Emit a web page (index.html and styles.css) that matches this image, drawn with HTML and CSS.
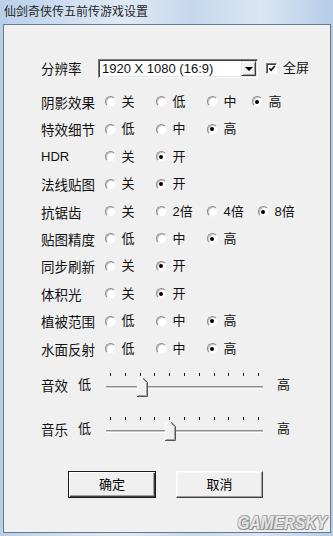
FILE: index.html
```html
<!DOCTYPE html>
<html lang="zh-CN">
<head>
<meta charset="utf-8">
<title>仙剑奇侠传五前传游戏设置</title>
<link rel="stylesheet" href="styles.css">
</head>
<body>
<div class="window">
  <div class="titlebar"><span class="title">仙剑奇侠传五前传游戏设置</span></div>
  <div class="frame">
    <div class="client">
      <div class="res-row">
        <span class="label res-label">分辨率</span>
        <div class="select">
          <span class="select-text">1920 X 1080 (16:9)</span>
          <span class="select-btn"><span class="arrow"></span></span>
        </div>
        <span class="checkbox"><svg width="9" height="9" viewBox="0 0 9 9"><path d="M1.5 4.2 L3.5 6.5 L7.6 1.8" fill="none" stroke="#000" stroke-width="1.7"/></svg></span>
        <span class="opt-text">全屏</span>
      </div>

      <div class="options">
        <div class="row"><span class="label">阴影效果</span>
          <span class="opt"><span class="radio"></span><span class="opt-text">关</span></span>
          <span class="opt"><span class="radio"></span><span class="opt-text">低</span></span>
          <span class="opt opt-narrow"><span class="radio"></span><span class="opt-text">中</span></span>
          <span class="opt"><span class="radio checked"></span><span class="opt-text">高</span></span>
        </div>
        <div class="row"><span class="label">特效细节</span>
          <span class="opt"><span class="radio"></span><span class="opt-text">低</span></span>
          <span class="opt"><span class="radio"></span><span class="opt-text">中</span></span>
          <span class="opt"><span class="radio checked"></span><span class="opt-text">高</span></span>
        </div>
        <div class="row"><span class="label label-latin">HDR</span>
          <span class="opt"><span class="radio"></span><span class="opt-text">关</span></span>
          <span class="opt"><span class="radio checked"></span><span class="opt-text">开</span></span>
        </div>
        <div class="row"><span class="label">法线贴图</span>
          <span class="opt"><span class="radio"></span><span class="opt-text">关</span></span>
          <span class="opt"><span class="radio checked"></span><span class="opt-text">开</span></span>
        </div>
        <div class="row"><span class="label">抗锯齿</span>
          <span class="opt"><span class="radio"></span><span class="opt-text">关</span></span>
          <span class="opt"><span class="radio"></span><span class="opt-text">2倍</span></span>
          <span class="opt"><span class="radio"></span><span class="opt-text">4倍</span></span>
          <span class="opt"><span class="radio checked"></span><span class="opt-text">8倍</span></span>
        </div>
        <div class="row"><span class="label">贴图精度</span>
          <span class="opt"><span class="radio"></span><span class="opt-text">低</span></span>
          <span class="opt"><span class="radio"></span><span class="opt-text">中</span></span>
          <span class="opt"><span class="radio checked"></span><span class="opt-text">高</span></span>
        </div>
        <div class="row"><span class="label">同步刷新</span>
          <span class="opt"><span class="radio"></span><span class="opt-text">关</span></span>
          <span class="opt"><span class="radio checked"></span><span class="opt-text">开</span></span>
        </div>
        <div class="row"><span class="label">体积光</span>
          <span class="opt"><span class="radio"></span><span class="opt-text">关</span></span>
          <span class="opt"><span class="radio checked"></span><span class="opt-text">开</span></span>
        </div>
        <div class="row"><span class="label">植被范围</span>
          <span class="opt"><span class="radio"></span><span class="opt-text">低</span></span>
          <span class="opt"><span class="radio"></span><span class="opt-text">中</span></span>
          <span class="opt"><span class="radio checked"></span><span class="opt-text">高</span></span>
        </div>
        <div class="row"><span class="label">水面反射</span>
          <span class="opt"><span class="radio"></span><span class="opt-text">低</span></span>
          <span class="opt"><span class="radio"></span><span class="opt-text">中</span></span>
          <span class="opt"><span class="radio checked"></span><span class="opt-text">高</span></span>
        </div>
      </div>

      <div class="slider-row first">
        <span class="label slider-label">音效</span>
        <span class="opt-text low">低</span>
        <div class="slider">
          <div class="ticks"><i></i><i></i><i></i><i></i><i></i><i></i><i></i><i></i><i></i><i></i><i></i></div>
          <div class="track"></div>
          <svg class="thumb" style="left:31px" width="11" height="20" viewBox="0 0 11 20">
            <polygon points="0.5,1.5 6,1.5 10.5,6 10.5,19.5 0.5,19.5" fill="#f0f0f0"/>
            <polyline points="0.5,19 0.5,1.5 6,1.5" fill="none" stroke="#ffffff" stroke-width="1"/>
            <polyline points="6,2 9.5,5.5 9.5,18.5 1,18.5" fill="none" stroke="#a0a0a0" stroke-width="1"/>
            <polyline points="6.2,0.9 10.5,5.5 10.5,19.5 0,19.5" fill="none" stroke="#555555" stroke-width="1"/>
          </svg>
        </div>
        <span class="opt-text high">高</span>
      </div>

      <div class="slider-row second">
        <span class="label slider-label">音乐</span>
        <span class="opt-text low">低</span>
        <div class="slider">
          <div class="ticks"><i></i><i></i><i></i><i></i><i></i><i></i><i></i><i></i><i></i><i></i><i></i></div>
          <div class="track"></div>
          <svg class="thumb" style="left:59px" width="11" height="20" viewBox="0 0 11 20">
            <polygon points="0.5,1.5 6,1.5 10.5,6 10.5,19.5 0.5,19.5" fill="#f0f0f0"/>
            <polyline points="0.5,19 0.5,1.5 6,1.5" fill="none" stroke="#ffffff" stroke-width="1"/>
            <polyline points="6,2 9.5,5.5 9.5,18.5 1,18.5" fill="none" stroke="#a0a0a0" stroke-width="1"/>
            <polyline points="6.2,0.9 10.5,5.5 10.5,19.5 0,19.5" fill="none" stroke="#555555" stroke-width="1"/>
          </svg>
        </div>
        <span class="opt-text high">高</span>
      </div>

      <div class="buttons">
        <button class="btn btn-default" type="button">确定</button>
        <button class="btn" type="button">取消</button>
      </div>

      <span class="watermark">GAMERSKY</span>
    </div>
  </div>
</div>
</body>
</html>
```

FILE: styles.css
```css
* { box-sizing: border-box; }

html, body {
  margin: 0;
  padding: 0;
  width: 333px;
  height: 536px;
  overflow: hidden;
  background: #bcd2ec;
  font-family: "Liberation Sans", "Noto Sans CJK SC", sans-serif;
  color: #000;
}

.window {
  width: 333px;
  height: 536px;
  display: flex;
  flex-direction: column;
  background: linear-gradient(90deg, #b9cfe9 0%, #cfdff1 20%, #dfe9f5 38%, #c5d8ee 58%, #d9e6f4 78%, #b6cde8 100%);
}

.titlebar {
  height: 24px;
  display: flex;
  align-items: center;
  padding-left: 4px;
  padding-bottom: 2px;
}

.title {
  font-family: "Noto Sans CJK SC", sans-serif;
  font-size: 12px;
  line-height: 14px;
  color: #262626;
}

.frame {
  flex: 1;
  padding: 0 2px 3px 3px;
  display: flex;
}

.client {
  position: relative;
  flex: 1;
  background: #f0f0f0;
  border: 1px solid #67788a;
  padding: 34px 0 0 37px;
}

.label {
  font-family: "Noto Sans CJK SC", sans-serif;
  font-size: 13.5px;
  line-height: 16px;
  width: 63.5px;
  flex: none;
  white-space: nowrap;
  color: #111;
}

.label-latin {
  font-family: "Liberation Sans", sans-serif;
  font-size: 13px;
}

.opt-text {
  font-family: "Liberation Sans", "Noto Sans CJK SC", sans-serif;
  font-size: 13px;
  line-height: 16px;
  white-space: nowrap;
  color: #111;
}

/* resolution row */
.res-row {
  display: flex;
  align-items: center;
  height: 18px;
}

.res-label { width: 57px; }

.select {
  width: 160px;
  height: 19px;
  display: flex;
  align-items: stretch;
  background: #fff;
  border: 1px solid;
  border-color: #7a7a7a #fff #fff #7a7a7a;
  box-shadow: inset 1px 1px 0 #404040, inset -1px -1px 0 #e3e3e3;
  padding: 1px 1px 1px 2px;
}

.select-text {
  flex: 1;
  font-size: 13px;
  line-height: 15px;
  padding-left: 1px;
  color: #111;
}

.select-btn {
  width: 15px;
  flex: none;
  background: #f0f0f0;
  border: 1px solid;
  border-color: #e3e3e3 #404040 #404040 #e3e3e3;
  box-shadow: inset 1px 1px 0 #fff, inset -1px -1px 0 #a0a0a0;
  display: flex;
  align-items: center;
  justify-content: center;
}

.arrow {
  width: 0;
  height: 0;
  border-left: 4px solid transparent;
  border-right: 4px solid transparent;
  border-top: 4px solid #000;
  margin-top: 1px;
}

.checkbox {
  width: 11px;
  height: 11px;
  margin-left: 8px;
  margin-right: 6px;
  background: #fff;
  border: 1px solid;
  border-color: #7a7a7a #fff #fff #7a7a7a;
  box-shadow: inset 1px 1px 0 #404040;
  display: flex;
  align-items: center;
  justify-content: center;
  padding: 1px 0 0 1px;
}

/* option rows */
.options {
  margin-top: 11.3px;
  display: flex;
  flex-direction: column;
}

.row {
  height: 27.4px;
  display: flex;
  align-items: center;
}

.opt {
  width: 51px;
  flex: none;
  display: flex;
  align-items: center;
}

.opt-narrow { width: 45px; }

.radio {
  width: 11px;
  height: 11px;
  flex: none;
  border-radius: 50%;
  background: #fff;
  border: 1px solid;
  border-color: #8a8a8a #f4f4f4 #f4f4f4 #8a8a8a;
  box-shadow: inset 1px 1px 0 #c8c8c8;
  margin-right: 6px;
  display: flex;
  align-items: center;
  justify-content: center;
}

.radio.checked::after {
  content: "";
  width: 4px;
  height: 4px;
  border-radius: 50%;
  background: #000;
}

/* sliders */
.slider-row {
  display: flex;
  align-items: center;
  height: 26px;
}

.slider-row.first { margin-top: 9.7px; }
.slider-row.second { margin-top: 18px; }

.slider-label { width: 37px; }

.low { width: 28px; flex: none; }

.slider {
  position: relative;
  width: 157px;
  height: 26px;
  flex: none;
  display: flex;
  flex-direction: column;
}

.ticks {
  display: flex;
  justify-content: space-between;
  margin: 1px 4px 0 4px;
  height: 3px;
}

.ticks i {
  display: block;
  width: 1px;
  height: 3px;
  background: #1a1a1a;
}

.track {
  margin-top: 10px;
  height: 3px;
  border-top: 1px solid #8c8c8c;
  border-bottom: 1px solid #ffffff;
  background: #c9c9c9;
}

.thumb {
  position: absolute;
  top: 5px;
}

.high { margin-left: 14px; }

/* buttons */
.buttons {
  display: flex;
  gap: 20px;
  margin-top: 29px;
  margin-left: 27px;
}

.btn {
  width: 88px;
  height: 27px;
  font-family: "Noto Sans CJK SC", sans-serif;
  font-size: 13px;
  line-height: 16px;
  color: #000;
  background: #f0f0f0;
  border: 1px solid;
  border-color: #ffffff #404040 #404040 #ffffff;
  box-shadow: inset -1px -1px 0 #a0a0a0, inset 1px 1px 0 #f8f8f8;
  padding: 0;
}

.btn + .btn { width: 87px; }

.btn-default {
  border: 1px solid #1a1a1a;
  box-shadow: inset 1px 1px 0 #ffffff, inset -1px -1px 0 #404040, inset -2px -2px 0 #a0a0a0;
}

.watermark {
  position: absolute;
  right: 3px;
  bottom: 0px;
  font-family: "Liberation Sans", sans-serif;
  font-weight: bold;
  font-style: italic;
  font-size: 18px;
  line-height: 18px;
  color: #e6e6e6;
  text-shadow: 1px 1px 0 #8a8a8a, -1px -1px 0 #b0b0b0, 1px -1px 0 #a0a0a0, -1px 1px 0 #a0a0a0;
  transform: scaleX(0.86);
  transform-origin: right center;
}
```
